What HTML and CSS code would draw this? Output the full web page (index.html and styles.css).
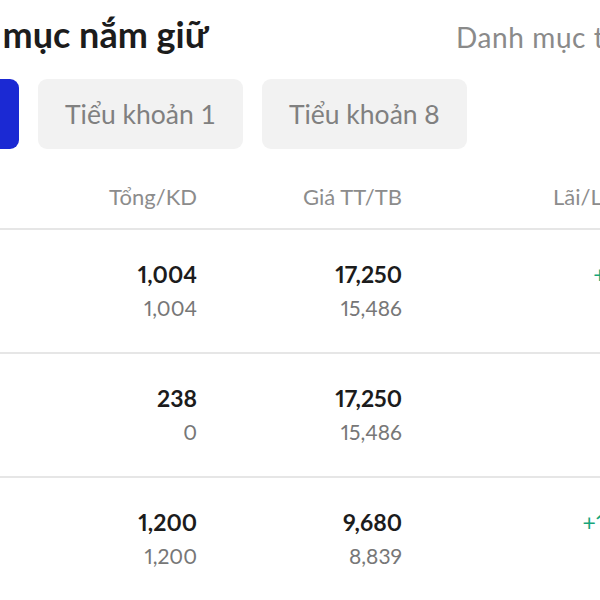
FILE: index.html
```html
<!DOCTYPE html>
<html>
  <head>
    <title>Danh mục nắm giữ</title>
    <meta charset="utf-8">
    <meta name="viewport" content="width=device-width, initial-scale=1">
    <link rel="stylesheet" href="styles.css">
  </head>
  <body>
    <div class="screen">
      <header class="head">
        <h1>Danh mục nắm giữ</h1>
        <span class="link">Danh mục theo dõi</span>
      </header>

      <nav class="tabs">
        <div class="tab active">Tất cả</div>
        <div class="tab">Tiểu khoản 1</div>
        <div class="tab">Tiểu khoản 8</div>
      </nav>

      <div class="table">
        <div class="row thead">
          <div class="cell">Tổng/KD</div>
          <div class="cell">Giá TT/TB</div>
          <div class="cell pl">Lãi/Lỗ</div>
        </div>
        <div class="row">
          <div class="cell"><b>1,004</b><span>1,004</span></div>
          <div class="cell"><b>17,250</b><span>15,486</span></div>
          <div class="cell pl up"><b>+1,771,056</b><span>+11.39%</span></div>
        </div>
        <div class="row">
          <div class="cell"><b>238</b><span>0</span></div>
          <div class="cell"><b>17,250</b><span>15,486</span></div>
          <div class="cell pl up"><b>+419,832</b><span>+11.39%</span></div>
        </div>
        <div class="row">
          <div class="cell"><b>1,200</b><span>1,200</span></div>
          <div class="cell"><b>9,680</b><span>8,839</span></div>
          <div class="cell pl up"><b>+1,009,200</b><span>+9.51%</span></div>
        </div>
      </div>
    </div>
  </body>
</html>
```

FILE: styles.css
```css
html, body {
  margin: 0;
  background: #fff;
}
body {
  font-family: Lato, "Noto Sans", sans-serif;
  color: #1c1c1c;
}
.screen {
  width: 600px;
  height: 600px;
  overflow: hidden;
}
.head {
  display: flex;
  align-items: baseline;
  white-space: nowrap;
  padding-top: 12px;
  height: 79px;
  box-sizing: border-box;
}
.head h1 {
  flex: 0 0 auto;
  width: 548px;
  margin: 0 0 0 -92px;
  font-size: 36px;
  font-weight: 700;
  line-height: 44px;
}
.link {
  font-size: 28px;
  letter-spacing: 0.6px;
  color: #8a8a8a;
}
.tabs {
  display: flex;
  gap: 19px;
  margin-left: -100px;
  white-space: nowrap;
}
.tab {
  height: 70px;
  padding: 0 27px;
  display: flex;
  align-items: center;
  border-radius: 9px;
  background: #f2f2f2;
  color: #808080;
  font-size: 26.5px;
}
.tab.active {
  width: 119px;
  padding: 0;
  justify-content: center;
  background: #1b29d3;
  color: #fff;
}
.row {
  display: grid;
  grid-template-columns: 197px 205px 298px;
  align-items: center;
  height: 122px;
  border-bottom: 2px solid #e6e6e6;
  white-space: nowrap;
}
.row.thead {
  height: 79px;
  align-items: end;
}
.thead .cell {
  font-size: 22px;
  color: #8c8c8c;
  padding-bottom: 14px;
}
.cell {
  display: flex;
  flex-direction: column;
  align-items: flex-end;
  font-size: 21px;
  line-height: 34px;
  font-variant-numeric: proportional-nums;
}
.cell b {
  font-size: 23px;
  font-weight: 700;
  color: #1c1c1c;
}
.cell span {
  color: #777;
}
.thead .cell.pl {
  align-items: flex-start;
  padding-left: 151px;
}
.cell.up b, .cell.up span {
  font-weight: 400;
  color: #17a57a;
}
```
